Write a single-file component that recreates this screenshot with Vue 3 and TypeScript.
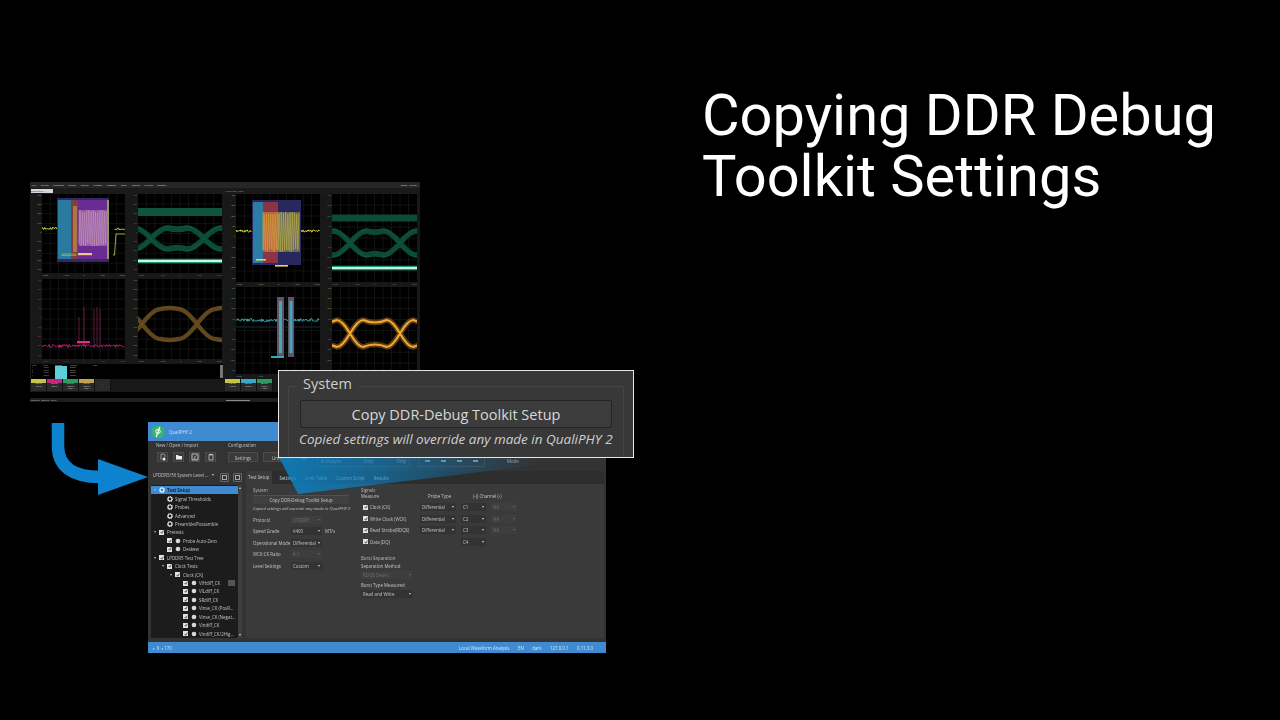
<script setup lang="ts">
interface Mark {
  d: string
  stroke?: string
  fill?: string
  w?: number
  o?: number
}

interface Pane {
  id: string
  axisW: number
  w: number
  h: number
  color: string
  marks: Mark[]
}

interface TreeRow {
  label: string
  level: number
  caret?: boolean
  check?: boolean
  icon?: 'gear' | 'dot'
  active?: boolean
  badge?: boolean
}

let seed = 17
function rnd() {
  seed = (seed * 16807) % 2147483647
  return seed / 2147483647
}

function box(x: number, y: number, w: number, h: number) {
  return `M${x} ${y}h${w}v${h}h${-w}z`
}

function grid(w: number, h: number) {
  let d = ''
  for (let i = 1; i < 10; i++) d += `M${(w * i) / 10} 0V${h}`
  for (let i = 1; i < 8; i++) d += `M0 ${(h * i) / 8}H${w}`
  return { d, stroke: '#222', w: 0.5 }
}

function noise(x0: number, x1: number, y: number, amp: number) {
  let d = `M${x0} ${y}`
  for (let x = x0; x < x1; x += 0.7) d += `L${x.toFixed(1)} ${(y + (rnd() - 0.5) * amp).toFixed(1)}`
  return d
}

function dense(x0: number, x1: number, y0: number, y1: number, step = 1.1) {
  let d = `M${x0} ${y0}`
  let up = false
  for (let x = x0; x < x1; x += step) {
    const j = rnd() * 3
    d += `L${x.toFixed(1)} ${(up ? y0 + j : y1 - j).toFixed(1)}`
    up = !up
  }
  return d
}

// one eye: two strands between each pair of crossings, dip makes the double hump
function eye(xs: number[], top: number, bottom: number, ease: number, dip = 0) {
  const mid = (top + bottom) / 2
  let d = ''
  for (let i = 0; i < xs.length - 1; i++) {
    const a = xs[i]
    const b = xs[i + 1]
    const c = (a + b) / 2
    for (const [y, s] of [[top, 1], [bottom, -1]]) {
      const rise = mid + (y - mid) * 0.45
      d += `M${a} ${mid}C${a + ease * 0.3} ${rise} ${a + ease * 0.75} ${y} ${a + ease * 1.1} ${y}`
      d += `Q${c} ${y + s * dip * 2} ${b - ease * 1.1} ${y}`
      d += `C${b - ease * 0.75} ${y} ${b - ease * 0.3} ${rise} ${b} ${mid}`
    }
  }
  return d
}

const panes: Pane[] = [
  {
    id: 'a', axisW: 11, w: 83, h: 79, color: '#a8a848',
    marks: [
      grid(83, 79),
      { d: noise(0, 16, 34.5, 2.4), stroke: '#d8d84c', w: 1 },
      { d: 'M71 61H72.5L74 40H83', stroke: '#b9b948', w: 0.9 },
      { d: noise(73, 83, 35, 2), stroke: '#d8d84c', w: 1 },
      { d: box(15, 4, 52, 64), fill: '#34286a' },
      { d: box(16, 6, 13, 59), fill: '#2a7a9f' },
      { d: box(29, 6, 7, 59), fill: '#7c3f3c' },
      { d: box(31, 12, 4, 46), fill: '#b0763c' },
      { d: box(36, 6, 29, 59), fill: '#6a2c93' },
      { d: box(65, 6, 2, 59), fill: '#94985a' },
      { d: box(37, 16, 28, 36), fill: '#c89ab8', o: 0.45 },
      { d: dense(37, 65, 16, 52), stroke: '#d6a6c6', w: 0.6, o: 0.7 },
      { d: box(20, 60, 14, 1.4), stroke: '#d8d84c', w: 0.5 },
      { d: box(36, 59, 14, 2.2), fill: '#e8c890' },
    ],
  },
  {
    id: 'b', axisW: 11, w: 84, h: 79, color: '#38926e',
    marks: [
      grid(84, 79),
      { d: 'M0 18H84', stroke: '#0d553b', w: 8 },
      { d: eye([-40, 13, 66, 119], 34, 55, 15, 1.5), stroke: '#0b4a34', w: 5.5 },
      { d: eye([-40, 13, 66, 119], 32, 57, 16, 1), stroke: '#126045', w: 1, o: 0.7 },
      { d: 'M0 67H84', stroke: '#1f9a72', w: 4.5 },
      { d: 'M0 67H84', stroke: '#c8f8e4', w: 1.8 },
    ],
  },
  {
    id: 'c', axisW: 11, w: 83, h: 80, color: '#a83070',
    marks: [
      grid(83, 80),
      { d: noise(0, 83, 67, 3), stroke: '#d62d80', w: 0.8 },
      { d: 'M37 67V38M42 67V28M52 67V30M55 67V28M58 67V30', stroke: '#a82a66', w: 0.6 },
      { d: box(35, 62, 13, 2.2), fill: '#e0308c' },
    ],
  },
  {
    id: 'd', axisW: 11, w: 84, h: 80, color: '#a8924a',
    marks: [
      grid(84, 80),
      { d: eye([-51, 4, 59, 114], 30, 60, 17, -1), stroke: '#5e441c', w: 4.5 },
      { d: eye([-51, 4, 59, 114], 29, 61, 18, -1), stroke: '#73541f', w: 1, o: 0.7 },
    ],
  },
  {
    id: 'e', axisW: 11, w: 84, h: 88, color: '#a8a848',
    marks: [
      grid(84, 88),
      { d: noise(0, 16, 37, 2.4), stroke: '#d8d84c', w: 1 },
      { d: noise(65, 84, 37, 2.4), stroke: '#d8d84c', w: 1 },
      { d: box(16, 6, 49, 65), fill: '#28285f' },
      { d: box(17, 8, 10, 61), fill: '#2a7da5' },
      { d: box(27, 8, 15, 61), fill: '#8c3346' },
      { d: box(27, 18, 15, 40), fill: '#d89a3c', o: 0.5 },
      { d: dense(27, 42, 18, 58), stroke: '#d89a3c', w: 0.7 },
      { d: box(42, 18, 22, 40), fill: '#b6ae4c', o: 0.45 },
      { d: dense(42, 64, 18, 58), stroke: '#b6ae4c', w: 0.7 },
      { d: box(20, 65, 10, 1.6), fill: '#d8d84c' },
      { d: box(39, 71, 13, 1.6), fill: '#e8d84c' },
    ],
  },
  {
    id: 'f', axisW: 10, w: 85, h: 88, color: '#38926e',
    marks: [
      grid(85, 88),
      { d: 'M0 24H85', stroke: '#0c4c36', w: 7 },
      { d: eye([-32, 18, 68, 118], 37, 61, 15, 1.5), stroke: '#0b4a34', w: 5.5 },
      { d: eye([-32, 18, 68, 118], 35, 63, 16, 1), stroke: '#126045', w: 1, o: 0.7 },
      { d: 'M0 74H85', stroke: '#1f9a72', w: 4.5 },
      { d: 'M0 74H85', stroke: '#c0f4de', w: 1.8 },
    ],
  },
  {
    id: 'g', axisW: 11, w: 84, h: 87, color: '#48a0a0',
    marks: [
      grid(84, 87),
      { d: 'M0 40H84', stroke: '#234a66', w: 0.6 },
      { d: noise(0, 84, 33, 3.4), stroke: '#45c0c8', w: 0.8 },
      { d: box(41, 10, 7, 60), fill: '#5d5560' },
      { d: box(52, 10, 6, 60), fill: '#5d5560' },
      { d: box(43, 14, 3, 52), fill: '#4aa2bc' },
      { d: box(53.5, 14, 3, 52), fill: '#4aa2bc' },
      { d: box(35, 69, 13, 2), fill: '#3aa6c0' },
    ],
  },
  {
    id: 'h', axisW: 10, w: 85, h: 87, color: '#a8843a',
    marks: [
      grid(85, 87),
      { d: eye([-32, 18, 68, 118], 33, 60, 12, 2.5), stroke: '#8a5a18', w: 5.5, o: 0.65 },
      { d: eye([-32, 18, 68, 118], 33, 60, 12, 2.5), stroke: '#f0a832', w: 2.2 },
    ],
  },
]

const axisValues = ['400', '300', '200', '100', '0', '-100', '-200', '-300', '-400']
const timeValues = ['-2.0ns', '-1.0ns', '0', '1.0ns', '2.0ns']
const menuItems = ['File', 'Vertical', 'Timebase', 'Trigger', 'Display', 'Cursors', 'Measure', 'Math', 'Analysis', 'Utilities', 'Support']

const chipsLeft = [
  { color: '#c6c24a', lines: ['100 mV', '1.00 ns'] },
  { color: '#c02880', lines: ['50.0 mV', '500 ps'] },
  { color: '#2e9a62', lines: ['50.0 mV', '500 ps', '1.000 V'] },
  { color: '#c2a24e', lines: ['100 mV', '500 ps', '1.000 V'] },
]
const chipsRight = [
  { color: '#c6c24a', lines: ['100 mV', '1.00 ns'] },
  { color: '#3aa6c8', lines: ['50.0 mV', '500 ps'] },
  { color: '#2e9a62', lines: ['50.0 mV', '500 ps', '1.000 V'] },
]

const tree: TreeRow[] = [
  { label: 'Test Setup', level: 0, caret: true, icon: 'gear', active: true },
  { label: 'Signal Thresholds', level: 1, icon: 'gear' },
  { label: 'Probes', level: 1, icon: 'gear' },
  { label: 'Advanced', level: 1, icon: 'gear' },
  { label: 'Preamble/Postamble', level: 1, icon: 'gear' },
  { label: 'Pretests', level: 0, caret: true, check: true },
  { label: 'Probe Auto-Zero', level: 1, check: true, icon: 'dot' },
  { label: 'Deskew', level: 1, check: true, icon: 'dot' },
  { label: 'LPDDR5 Test Tree', level: 0, caret: true, check: true },
  { label: 'Clock Tests', level: 1, caret: true, check: true },
  { label: 'Clock (CK)', level: 2, caret: true, check: true },
  { label: 'VIHdiff_CK', level: 3, check: true, icon: 'dot', badge: true },
  { label: 'VILdiff_CK', level: 3, check: true, icon: 'dot' },
  { label: 'SRdiff_CK', level: 3, check: true, icon: 'dot' },
  { label: 'Vinse_CK (PosR...', level: 3, check: true, icon: 'dot' },
  { label: 'Vinse_CK (Negat...', level: 3, check: true, icon: 'dot' },
  { label: 'Vindiff_CK', level: 3, check: true, icon: 'dot' },
  { label: 'Vindiff_CK/2Hig...', level: 3, check: true, icon: 'dot' },
]

const tabs = ['Test Setup', 'Settings', 'Limit Table', 'Custom Script', 'Results']

const formRows = [
  { label: 'Protocol', value: 'LPDDR5', off: true, unit: '' },
  { label: 'Speed Grade', value: '6400', off: false, unit: 'MT/s' },
  { label: 'Operational Mode', value: 'Differential', off: false, unit: '' },
  { label: 'WCK:CK Ratio', value: '4:1', off: true, unit: '' },
  { label: 'Level Settings', value: 'Custom', off: false, unit: '' },
]

const signals = [
  { label: 'Clock (CK)', probe: 'Differential', ch: 'C1', neg: 'NA' },
  { label: 'Write Clock (WCK)', probe: 'Differential', ch: 'C2', neg: 'NA' },
  { label: 'Read Strobe(RDQS)', probe: 'Differential', ch: 'C3', neg: 'NA' },
  { label: 'Data (DQ)', probe: '', ch: 'C4', neg: '' },
]
</script>

<template>
  <div class="stage">
    <h1 class="title">Copying DDR Debug Toolkit Settings</h1>

    <div class="scope">
      <div class="scope-menu">
        <span v-for="m in menuItems" :key="m" class="scope-menu-item">{{ m }}</span>
        <span class="scope-menu-right">Zoom &nbsp; Marker</span>
      </div>
      <div class="scope-tabs">
        <span class="scope-tab">Dashboard_1</span>
        <span class="scope-tab scope-tab-dark">WebGraph_Load</span>
      </div>
      <div class="scope-body">
        <div class="scope-side scope-left">
          <div class="pane-grid">
            <div v-for="p in panes.slice(0, 4)" :key="p.id" class="pane">
              <div class="axis" :style="{ width: p.axisW + 'px', color: p.color }">
                <span v-for="v in axisValues" :key="v">{{ v }}</span>
              </div>
              <div>
                <svg class="plot" :width="p.w" :height="p.h" :viewBox="`0 0 ${p.w} ${p.h}`">
                  <path v-for="(m, i) in p.marks" :key="i" :d="m.d" :fill="m.fill || 'none'" :stroke="m.stroke" :stroke-width="m.w" :opacity="m.o" />
                </svg>
                <div class="xaxis" :style="{ color: p.color }">
                  <span v-for="t in timeValues" :key="t">{{ t }}</span>
                </div>
              </div>
            </div>
          </div>
          <div class="meas-table">
            <div class="meas-col"><b>Index</b><span>1</span><span>2</span><span>3</span><span>4</span></div>
            <div class="meas-col"><b>Value</b><span>1.000 V</span><span>1.000 V</span><span>1.000 V</span><span>1.000 V</span></div>
            <div class="meas-col meas-cyan"><b>Measure</b><span>&nbsp;</span><span>&nbsp;</span><span>&nbsp;</span><span>&nbsp;</span></div>
            <div class="meas-col"><b>Message</b><span>Passed</span><span>Passed</span><span>Passed</span><span>Passed</span></div>
            <div class="meas-col meas-wide"><b>Note</b></div>
            <div class="meas-scroll"></div>
          </div>
          <div class="chips">
            <div v-for="c in chipsLeft" :key="c.color" class="chip">
              <div class="chip-head" :style="{ background: c.color }"></div>
              <span v-for="l in c.lines" :key="l">{{ l }}</span>
            </div>
            <div class="chip chip-btn">+</div>
          </div>
        </div>

        <div class="scope-side scope-right">
          <div class="pane-grid pane-grid-tight">
            <div v-for="p in panes.slice(4)" :key="p.id" class="pane">
              <div class="axis" :style="{ width: p.axisW + 'px', color: p.color }">
                <span v-for="v in axisValues" :key="v">{{ v }}</span>
              </div>
              <div>
                <svg class="plot" :width="p.w" :height="p.h" :viewBox="`0 0 ${p.w} ${p.h}`">
                  <path v-for="(m, i) in p.marks" :key="i" :d="m.d" :fill="m.fill || 'none'" :stroke="m.stroke" :stroke-width="m.w" :opacity="m.o" />
                </svg>
                <div class="xaxis" :style="{ color: p.color }">
                  <span v-for="t in timeValues" :key="t">{{ t }}</span>
                </div>
              </div>
            </div>
          </div>
          <div class="chips chips-right">
            <div v-for="c in chipsRight" :key="c.color" class="chip">
              <div class="chip-head" :style="{ background: c.color }"></div>
              <span v-for="l in c.lines" :key="l">{{ l }}</span>
            </div>
          </div>
        </div>
      </div>
      <div class="scope-status">
        <span>Timebase 100GS/s 1.00 ns</span>
        <i class="scope-status-bar"></i>
      </div>
    </div>

    <svg class="arrow" width="100" height="74" viewBox="50 422 100 74">
      <path d="M58 423V446C58 466 72 477 100 477" fill="none" stroke="#0d83cf" stroke-width="12.5" />
      <path d="M98 459L148 477L98 495z" fill="#0d83cf" />
    </svg>

    <div class="qp">
      <div class="qp-title">
        <svg class="qp-logo" width="14" height="14" viewBox="0 0 14 14">
          <circle cx="7" cy="7" r="6.5" fill="#35b56f" />
          <path d="M8.8 2L5.2 12" stroke="#fff" stroke-width="1.2" />
          <ellipse cx="7" cy="6.4" rx="2.3" ry="2" fill="none" stroke="#fff" stroke-width="1" />
        </svg>
        <span>QualiPHY 2</span>
      </div>

      <div class="qp-toolbar">
        <div class="tb-group tb-files">
          <span class="tb-label">New / Open / Import</span>
          <div class="tb-icons">
            <span class="tb-icon">
              <svg width="8" height="8" viewBox="0 0 8 8"><path d="M2 1h3l1 1v2M2 1v6" fill="none" stroke="#bbb" stroke-width=".7" /><circle cx="5" cy="6" r="1.5" fill="#eee" /></svg>
            </span>
            <span class="tb-icon">
              <svg width="8" height="8" viewBox="0 0 8 8"><path d="M1 2h2l1 1h3v3.500H1z" fill="#eee" /></svg>
            </span>
            <span class="tb-icon">
              <svg width="8" height="8" viewBox="0 0 8 8"><path d="M1 1h6v6H1z" fill="none" stroke="#ddd" stroke-width=".8" /><path d="M2.500 5L5.500 2.500M2.500 6h3" stroke="#ddd" stroke-width=".7" /></svg>
            </span>
            <span class="tb-icon">
              <svg width="8" height="8" viewBox="0 0 8 8"><path d="M2 1.500h4v5.500H2zM3 1v1h2V1" fill="none" stroke="#ddd" stroke-width=".7" /></svg>
            </span>
          </div>
        </div>
        <div class="tb-group tb-config">
          <span class="tb-label">Configuration</span>
          <div class="tb-buttons">
            <span class="tb-btn tb-btn-settings">Settings</span>
            <span class="tb-btn tb-btn-limit">Limit</span>
          </div>
        </div>
        <span class="tb-arrows">▾▾</span>
        <div class="tb-box tb-run">
          <span>&amp; Analyze</span><span>Only</span><span>Only</span>
        </div>
        <div class="tb-box tb-view">
          <i></i><i></i><i></i><i></i>
        </div>
        <span class="tb-mode">Mode</span>
      </div>

      <div class="qp-main">
        <div class="qp-left">
          <div class="combo-row">
            <span class="combo sel">LPDDR5/5X System Level ...</span>
            <span class="square"><i></i></span>
            <span class="square"><i></i></span>
          </div>
          <div class="tree-wrap">
            <div class="tree">
              <div
                v-for="r in tree"
                :key="r.label"
                class="tree-row"
                :class="{ active: r.active }"
                :style="{ paddingLeft: r.level * 8 + 'px' }"
              >
                <span class="slot-caret"><i v-if="r.caret"></i></span>
                <span v-if="r.check" class="slot-check">
                  <span class="check">
                    <svg width="4" height="4" viewBox="0 0 4 4"><path d="M.7 2.100L1.700 3.200L3.300 .7" fill="none" stroke="#222" stroke-width=".8" /></svg>
                  </span>
                </span>
                <span v-if="r.icon" class="slot-icon">
                  <svg width="6" height="6" viewBox="0 0 6 6">
                    <template v-if="r.icon === 'gear'">
                      <circle cx="3" cy="3" r="2" fill="none" :stroke="r.active ? '#dff' : '#eee'" stroke-width="1.100" />
                      <circle cx="3" cy="3" r="2.600" fill="none" :stroke="r.active ? '#dff' : '#eee'" stroke-width=".8" stroke-dasharray="1 1" />
                    </template>
                    <template v-else>
                      <circle cx="3" cy="3" r="2.300" fill="#d8d8d8" />
                    </template>
                  </svg>
                </span>
                <span class="tree-label">{{ r.label }}</span>
                <span v-if="r.badge" class="tree-badge"></span>
              </div>
            </div>
            <div class="tree-scroll">
              <i class="up"></i>
              <i class="down"></i>
            </div>
          </div>
        </div>

        <div class="qp-right">
          <div class="qp-tabs">
            <span v-for="(t, i) in tabs" :key="t" class="qp-tab" :class="{ first: i === 0 }">{{ t }}</span>
          </div>
          <div class="qp-panel">
            <div class="sys-col">
              <div class="group-title">System</div>
              <div class="sys-btn">Copy DDR-Debug Toolkit Setup</div>
              <div class="sys-note">Copied settings will override any made in QualiPHY 2</div>
              <div class="form">
                <template v-for="f in formRows" :key="f.label">
                  <span>{{ f.label }}</span>
                  <span class="sel" :class="{ off: f.off }">{{ f.value }}</span>
                  <span>{{ f.unit }}</span>
                </template>
              </div>
            </div>
            <div class="sig-col">
              <div class="group-title">Signals</div>
              <div class="sig-grid">
                <span>Measure</span>
                <span class="sig-head">Probe Type</span>
                <span class="sig-head sig-span">(-)) Channel (-)</span>
                <template v-for="s in signals" :key="s.label">
                  <span class="sig-name">
                    <span class="check">
                      <svg width="4" height="4" viewBox="0 0 4 4"><path d="M.7 2.100L1.700 3.200L3.300 .7" fill="none" stroke="#222" stroke-width=".8" /></svg>
                    </span>
                    {{ s.label }}
                  </span>
                  <span v-if="s.probe" class="sel">{{ s.probe }}</span><span v-else></span>
                  <span class="sel">{{ s.ch }}</span>
                  <span v-if="s.neg" class="sel off">{{ s.neg }}</span><span v-else></span>
                </template>
              </div>
              <div class="burst">
                <div class="group-title">Burst Separation</div>
                <div class="burst-label">Separation Method</div>
                <span class="sel off burst-sel">RDQS Detect</span>
                <div class="burst-label">Burst Type Measured</div>
                <span class="sel burst-sel">Read and Write</span>
              </div>
            </div>
          </div>
        </div>
      </div>

      <div class="qp-status">
        <span class="qp-status-left">◐ 0 ◑ 170</span>
        <span class="qp-status-right">
          <span>Local Waveform Analysis</span><span>EN</span><span>dark</span><span>127.0.0.1</span><span>0.11.3.0</span>
        </span>
      </div>
    </div>

    <svg class="wedge" width="330" height="38" viewBox="278 457 330 38">
      <defs>
        <linearGradient id="wedgeFill" x1="0" x2="1" y1="0" y2="0">
          <stop offset="0" stop-color="#0b84c8" stop-opacity=".85" />
          <stop offset=".3" stop-color="#0b84c8" stop-opacity=".6" />
          <stop offset=".8" stop-color="#0b84c8" stop-opacity="0" />
        </linearGradient>
      </defs>
      <path d="M279 457L298 494L606 457z" fill="url(#wedgeFill)" />
    </svg>

    <div class="callout">
      <div class="callout-legend">System</div>
      <div class="callout-group">
        <div class="callout-btn">Copy DDR-Debug Toolkit Setup</div>
        <div class="callout-note">Copied settings will override any made in QualiPHY 2</div>
      </div>
    </div>
  </div>
</template>

<style>
html,
body {
  background: #000;
}
</style>

<style scoped>
.stage {
  position: relative;
  width: 1280px;
  height: 720px;
  background: #000;
  overflow: hidden;
  font-family: "Open Sans", "Liberation Sans", sans-serif;
}

.title {
  position: absolute;
  left: 702px;
  top: 85px;
  width: 540px;
  margin: 0;
  font-family: Roboto, "Liberation Sans", sans-serif;
  font-size: 57.8px;
  font-weight: 400;
  line-height: 61px;
  color: #fff;
}

/* oscilloscope window */
.scope {
  position: absolute;
  left: 30px;
  top: 182px;
  width: 390px;
  height: 220px;
  display: flex;
  flex-direction: column;
  filter: blur(0.35px);
  font-size: 2.4px;
  color: #bbb;
}

.scope-menu {
  height: 6px;
  display: flex;
  align-items: center;
  gap: 4.5px;
  padding-left: 2px;
  background: #262626;
  color: #ddd;
}

.scope-menu-item {
  white-space: nowrap;
}

.scope-menu-right {
  margin-left: auto;
  margin-right: 3px;
  white-space: nowrap;
}

.scope-tabs {
  height: 6px;
  display: flex;
  background: #1a1a1a;
  padding-top: 1px;
  box-sizing: border-box;
}

.scope-tab {
  width: 22px;
  height: 4px;
  margin-left: 1px;
  background: #d8d8d8;
  color: #333;
  line-height: 4px;
}

.scope-tab-dark {
  margin-left: 172px;
  background: none;
  color: #6f9ec0;
}

.scope-body {
  display: flex;
  gap: 2px;
  height: 198px;
  background: #181818;
}

.scope-side {
  display: flex;
  flex-direction: column;
}

.scope-left {
  padding-left: 1px;
  width: 192px;
}

.scope-right {
  width: 195px;
}

.pane-grid {
  display: grid;
  grid-template-columns: auto auto;
  justify-content: start;
  gap: 2px;
}

.pane-grid-tight {
  gap: 1px 2px;
}

.pane {
  display: flex;
}

.axis {
  display: flex;
  flex-direction: column;
  justify-content: space-between;
  align-items: flex-end;
  padding: 1px 1px 6px 0;
  box-sizing: border-box;
  font-size: 2.2px;
  line-height: 2.2px;
}

.plot {
  display: block;
  background: #000;
}

.xaxis {
  height: 4px;
  display: flex;
  justify-content: space-between;
  align-items: center;
  font-size: 2.2px;
}

.meas-table {
  position: relative;
  height: 15px;
  margin-top: 1px;
  display: flex;
  gap: 3px;
  background: #000;
  padding-left: 1px;
  font-size: 1.8px;
  line-height: 2.400px;
  color: #aaa;
}

.meas-col {
  display: flex;
  flex-direction: column;
  width: 8px;
  padding-top: 1px;
}

.meas-col b {
  font-weight: 400;
}

.meas-cyan {
  width: 12px;
  margin-left: 1px;
  background: linear-gradient(#0000 2.5px, #5ccfd8 2.5px);
  color: #cfeff2;
}

.meas-wide {
  margin-left: 12px;
}

.meas-scroll {
  position: absolute;
  right: 0;
  top: 1px;
  width: 3px;
  height: 13px;
  background: #777;
}

.chips {
  display: flex;
  height: 12px;
  background: #181818;
  font-size: 2px;
  line-height: 2.500px;
  color: #ccc;
}

.chips-right {
  margin-top: 1px;
}

.chip {
  width: 15px;
  display: flex;
  flex-direction: column;
  align-items: center;
  background: #2a2a2a;
  border-right: 0.5px solid #111;
}

.chip-head {
  width: 100%;
  height: 3.500px;
  margin-bottom: 0.5px;
}

.chip-btn {
  justify-content: center;
  color: #999;
  font-size: 3px;
}

.scope-status {
  height: 4px;
  margin-top: 6px;
  display: flex;
  justify-content: space-between;
  align-items: center;
  background: #1e1e1e;
  font-size: 2.200px;
  color: #bbb;
}

.scope-status-bar {
  width: 24px;
  height: 1px;
  margin-right: 170px;
  background: #8a8a8a;
}

.arrow {
  position: absolute;
  left: 50px;
  top: 422px;
}

/* QualiPHY window */
.qp {
  position: absolute;
  left: 148px;
  top: 422px;
  width: 458px;
  height: 231px;
  display: flex;
  flex-direction: column;
  background: #333;
  filter: blur(0.35px);
  font-size: 4.4px;
  color: #c4c4c4;
}

.qp-title {
  height: 19px;
  flex-shrink: 0;
  display: flex;
  align-items: center;
  gap: 4px;
  padding-left: 3px;
  background: #3f8ad0;
  color: #cfe4f6;
}

.qp-logo {
  display: block;
}

.qp-toolbar {
  position: relative;
  height: 30px;
  flex-shrink: 0;
  display: flex;
}

.tb-group {
  display: flex;
  flex-direction: column;
  gap: 3px;
  padding-top: 1px;
}

.tb-files {
  width: 72px;
  margin-left: 8px;
}

.tb-label {
  height: 7px;
  line-height: 7px;
}

.tb-icons {
  display: flex;
  gap: 5px;
  margin-left: 1px;
}

.tb-icon {
  width: 11px;
  height: 10px;
  display: flex;
  align-items: center;
  justify-content: center;
  border: 0.5px solid #4c4c4c;
  box-sizing: border-box;
  background: #3a3a3a;
}

.tb-buttons {
  display: flex;
  gap: 5px;
}

.tb-btn {
  height: 10px;
  line-height: 10px;
  text-align: center;
  border: 0.5px solid #4c4c4c;
  box-sizing: border-box;
  background: #3a3a3a;
}

.tb-btn-settings {
  width: 30px;
}

.tb-btn-limit {
  width: 28px;
}

.tb-config {
  width: 65px;
}

.tb-arrows {
  width: 24px;
  box-sizing: border-box;
  padding: 14px 0 0 8px;
  font-size: 6px;
  line-height: 6px;
  color: #ccd;
}

.tb-box {
  height: 11px;
  margin-top: 15px;
  border: 0.5px solid #484848;
  border-top: 0;
  box-sizing: border-box;
  display: flex;
  align-items: center;
  color: #aab;
}

.tb-run {
  width: 93px;
  padding-left: 3px;
  gap: 23px;
}

.tb-view {
  width: 67px;
  margin-left: 8px;
  justify-content: space-around;
}

.tb-view i {
  width: 5px;
  height: 2px;
  background: #999;
}

.tb-mode {
  margin-left: 22px;
  padding-top: 17px;
  line-height: 7px;
  color: #aaa;
}

.qp-main {
  flex: 1;
  min-height: 0;
  display: flex;
  padding-left: 3px;
}

.qp-left {
  width: 91px;
  flex-shrink: 0;
  display: flex;
  flex-direction: column;
}

.combo-row {
  height: 14px;
  flex-shrink: 0;
  display: flex;
  align-items: flex-start;
  gap: 3px;
}

.combo {
  width: 65px;
  height: 12px;
  padding-left: 1px;
  line-height: 12px;
  background: #2c2c2c;
}

.combo::after {
  top: 5px;
}

.square {
  width: 9px;
  height: 9px;
  margin: 2px 0 0 1px;
  display: flex;
  align-items: center;
  justify-content: center;
  border: 0.7px solid #666;
  border-radius: 1px;
  box-sizing: border-box;
}

.square i {
  width: 3px;
  height: 3px;
  border: 0.5px solid #aaa;
}

.tree-wrap {
  flex: 1;
  min-height: 0;
  display: flex;
  margin-bottom: 4px;
  overflow: hidden;
}

.tree {
  width: 87px;
  flex-shrink: 0;
  padding-top: 1px;
  box-sizing: border-box;
  background: #1c1c1c;
  overflow: hidden;
}

.tree-row {
  position: relative;
  height: 8.450px;
  display: flex;
  align-items: center;
  white-space: nowrap;
}

.tree-row.active {
  background: #3f8ad0;
  color: #123;
  font-weight: 700;
}

.slot-caret {
  width: 8px;
  flex-shrink: 0;
  display: flex;
  justify-content: center;
}

.slot-caret i {
  width: 0;
  height: 0;
  border-left: 1.5px solid transparent;
  border-right: 1.5px solid transparent;
  border-top: 2px solid #bbb;
}

.slot-check {
  width: 8px;
  flex-shrink: 0;
  display: flex;
}

.check {
  width: 5px;
  height: 5px;
  display: inline-flex;
  align-items: center;
  justify-content: center;
  flex-shrink: 0;
  background: #e2e2e2;
}

.slot-icon {
  width: 8px;
  flex-shrink: 0;
  display: flex;
}

.tree-badge {
  position: absolute;
  right: 3px;
  width: 7px;
  height: 6px;
  background: #555;
}

.tree-scroll {
  width: 4px;
  display: flex;
  flex-direction: column;
  justify-content: space-between;
  align-items: center;
  padding: 2px 0;
  background: #3e3e3e;
}

.tree-scroll i {
  width: 0;
  height: 0;
  border-left: 1.5px solid transparent;
  border-right: 1.5px solid transparent;
}

.tree-scroll .up {
  border-bottom: 2px solid #ccc;
}

.tree-scroll .down {
  border-top: 2px solid #ccc;
}

.qp-right {
  flex: 1;
  min-width: 0;
  display: flex;
  flex-direction: column;
  padding: 0 2px 4px 4px;
}

.qp-tabs {
  height: 13px;
  flex-shrink: 0;
  display: flex;
  align-items: center;
  gap: 7px;
  background: #2d2d2d;
}

.qp-tab {
  padding: 0 1px;
  color: #b8d8ec;
}

.qp-tab.first {
  height: 13px;
  line-height: 13px;
  padding: 0 2px 0 2px;
  background: #3b3b3b;
  color: #ccc;
}

.qp-panel {
  flex: 1;
  min-height: 0;
  display: flex;
  background: #3a3a3a;
  padding: 2px 4px 2px 7px;
}

.group-title {
  height: 8px;
  line-height: 8px;
  color: #bbb;
}

.sys-col {
  width: 108px;
  flex-shrink: 0;
}

.sys-btn {
  width: 96px;
  height: 8px;
  margin-top: 1px;
  line-height: 8px;
  text-align: center;
  background: #404040;
  border-top: 0.5px solid #505050;
}

.sys-note {
  margin-top: 1px;
  font-size: 4.200px;
  line-height: 8px;
  font-style: italic;
  white-space: nowrap;
}

.form {
  display: grid;
  grid-template-columns: 38px 31px auto;
  grid-auto-rows: 11.500px;
  align-items: center;
  margin-top: 1px;
}

.sel {
  position: relative;
  height: 8px;
  line-height: 8px;
  padding-left: 2px;
  box-sizing: border-box;
  background: #333;
  white-space: nowrap;
  overflow: hidden;
  display: block;
}

.sel::after {
  content: '';
  position: absolute;
  right: 2px;
  top: 3px;
  border-left: 1.500px solid transparent;
  border-right: 1.500px solid transparent;
  border-top: 2px solid #ccc;
}

.sel.off {
  color: #6e6e6e;
  background: #3e3e3e;
}

.sel.off::after {
  border-top-color: #666;
}

.form > span:nth-child(3n) {
  padding-left: 3px;
}

.sig-col {
  flex: 1;
  min-width: 0;
}

.sig-grid {
  display: grid;
  grid-template-columns: 54px 36px 25px 26px;
  column-gap: 5px;
  grid-auto-rows: 11.500px;
  align-items: center;
  margin-top: -4px;
}

.sig-head {
  padding-left: 8px;
  white-space: nowrap;
}

.sig-span {
  grid-column: span 2;
  padding-left: 12px;
}

.sig-name {
  display: flex;
  align-items: center;
  gap: 2px;
  padding-left: 2px;
  white-space: nowrap;
}

.burst {
  margin-top: 6px;
}

.burst-label {
  height: 6px;
  line-height: 6px;
  margin-top: 1px;
}

.burst-sel {
  width: 52px;
  margin: 2px 0 3px;
}

.qp-status {
  height: 11px;
  flex-shrink: 0;
  display: flex;
  justify-content: space-between;
  align-items: center;
  padding: 0 13px 0 5px;
  background: #3f8ad0;
  color: #d6e8f6;
}

.qp-status-right {
  display: flex;
  gap: 8.500px;
}

.wedge {
  position: absolute;
  left: 278px;
  top: 457px;
}

/* enlarged callout */
.callout {
  position: absolute;
  left: 278px;
  top: 370px;
  width: 356px;
  height: 88px;
  box-sizing: border-box;
  border: 1.5px solid #e6e6e6;
  background: #383838;
  color: #cfcfcf;
  padding: 6px 9px 0;
}

.callout-legend {
  position: absolute;
  left: 18px;
  top: 3px;
  padding: 0 6px;
  font-size: 14.500px;
  line-height: 20px;
  background: #383838;
}

.callout-group {
  height: 71px;
  margin-top: 9px;
  padding: 13px 11px 0;
  border: 1px solid #454545;
  border-bottom: 0;
  border-radius: 2px;
  box-sizing: border-box;
}

.callout-btn {
  height: 28px;
  line-height: 27px;
  text-align: center;
  font-size: 14.500px;
  background: #3c3c3c;
  border: 1px solid #242424;
  border-radius: 2px;
  box-sizing: border-box;
  color: #d8d8d8;
}

.callout-note {
  margin: 1px 0 0 -1px;
  font-size: 13.500px;
  line-height: 21px;
  font-style: italic;
  white-space: nowrap;
}
</style>
